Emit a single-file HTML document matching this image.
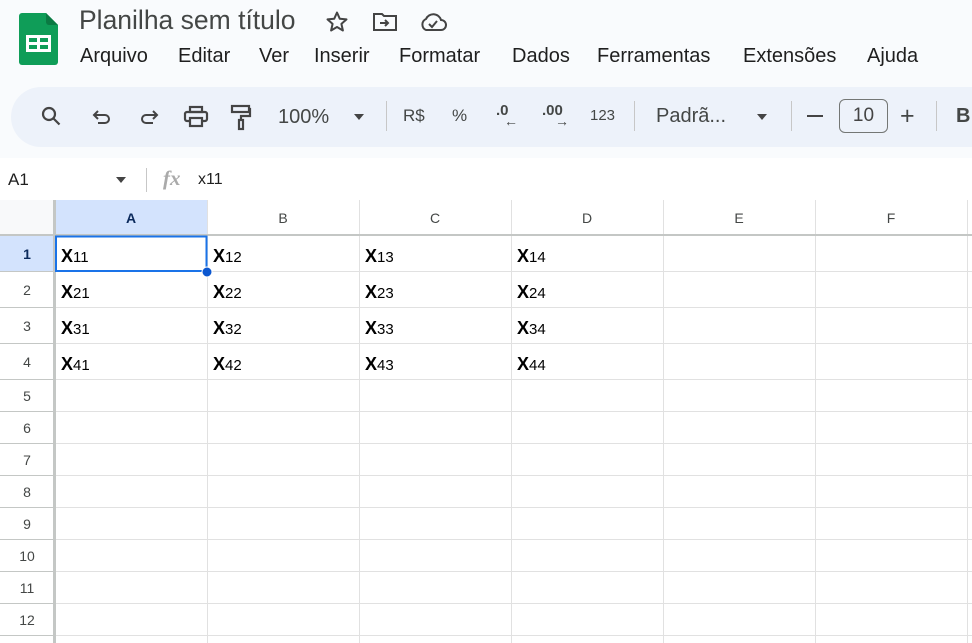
<!DOCTYPE html><html><head><meta charset="utf-8"><style>
*{margin:0;padding:0;box-sizing:border-box}
body{width:972px;height:643px;overflow:hidden;background:#f9fbfd;font-family:"Liberation Sans",Arial,sans-serif;position:relative;color:#1f1f1f}
.a{position:absolute}
.tb{color:#444746;font-size:19px}
.cell{position:absolute;font-size:15px;color:#000}
.cell b{font-weight:bold;font-size:18px}
.rh{position:absolute;left:0;width:54px;text-align:center;font-size:14px;color:#444746}
.ch{position:absolute;top:201px;height:35px;line-height:35px;text-align:center;font-size:14px;color:#444746}
</style></head><body>
<svg class="a" style="left:19px;top:13px" width="40" height="52" viewBox="0 0 40 52"><path d="M3 0h24l12 12v37a3 3 0 0 1-3 3H3a3 3 0 0 1-3-3V3a3 3 0 0 1 3-3z" fill="#0f9d58"/><path d="M27 0l12 12H30a3 3 0 0 1-3-3z" fill="#0b7a43"/><rect x="7" y="22" width="25" height="17" fill="#fff"/><rect x="10" y="25" width="8" height="4" fill="#0f9d58"/><rect x="21" y="25" width="8" height="4" fill="#0f9d58"/><rect x="10" y="32" width="8" height="4" fill="#0f9d58"/><rect x="21" y="32" width="8" height="4" fill="#0f9d58"/></svg>
<div class="a" style="left:79px;top:5px;font-size:26.5px;color:#444746">Planilha sem título</div>
<svg class="a" style="left:325px;top:10px" width="24" height="24" viewBox="0 0 24 24" fill="none" stroke="#444" stroke-width="2" stroke-linejoin="round"><path d="M12 2.5l2.8 6.3 6.7.6-5.1 4.5 1.5 6.6L12 17l-5.9 3.5 1.5-6.6-5.1-4.5 6.7-.6z"/></svg>
<svg class="a" style="left:372px;top:11px" width="26" height="22" viewBox="0 0 26 22" fill="none" stroke="#444" stroke-width="2"><path d="M2 3h8l2 2h12v14H2z"/><path d="M8 12h8M13 9l3 3-3 3"/></svg>
<svg class="a" style="left:419px;top:12px" width="28" height="20" viewBox="0 0 28 20" fill="none" stroke="#444" stroke-width="2"><path d="M7 18h15a5 5 0 0 0 0-10 8 8 0 0 0-15-1 6 6 0 0 0 0 11z"/><path d="M10 12l3 3 5-6"/></svg>
<div class="a" style="left:80px;top:45px;font-size:20px">
<span style="position:absolute;left:0">Arquivo</span><span style="position:absolute;left:98px">Editar</span><span style="position:absolute;left:179px">Ver</span><span style="position:absolute;left:234px">Inserir</span><span style="position:absolute;left:319px">Formatar</span><span style="position:absolute;left:432px">Dados</span><span style="position:absolute;left:517px">Ferramentas</span><span style="position:absolute;left:663px">Extensões</span><span style="position:absolute;left:787px">Ajuda</span></div>
<div class="a" style="left:11px;top:87px;width:1000px;height:60px;background:#edf2fa;border-radius:30px"></div>
<svg class="a" style="left:40px;top:105px" width="24" height="24" viewBox="0 0 24 24" fill="none" stroke="#444" stroke-width="2.2"><circle cx="9" cy="9" r="6"/><path d="M13.5 13.5l6 6"/></svg>
<svg class="a" style="left:90px;top:106px" width="24" height="24" viewBox="0 0 24 24" fill="none" stroke="#444" stroke-width="2"><path d="M5 9h10a4 4 0 0 1 0 8H8"/><path d="M8 5L4 9l4 4"/></svg>
<svg class="a" style="left:137px;top:106px" width="24" height="24" viewBox="0 0 24 24" fill="none" stroke="#444" stroke-width="2"><path d="M19 9H9a4 4 0 0 0 0 8h7"/><path d="M16 5l4 4-4 4"/></svg>
<svg class="a" style="left:183px;top:105px" width="26" height="24" viewBox="0 0 26 24" fill="none" stroke="#444" stroke-width="2.2"><rect x="7" y="2" width="12" height="5"/><rect x="2" y="7" width="22" height="9" rx="2"/><rect x="7" y="13" width="12" height="8" fill="#edf2fa"/></svg>
<svg class="a" style="left:230px;top:104px" width="22" height="28" viewBox="0 0 22 28" fill="none" stroke="#444" stroke-width="2.2"><rect x="2" y="2" width="17" height="6"/><path d="M19 5h1v7H11v4"/><rect x="9" y="16" width="4" height="9"/></svg>
<div class="a tb" style="left:278px;top:106px;font-size:20px">100%</div>
<div class="a" style="left:354px;top:114px;border:5px solid transparent;border-top:6px solid #444"></div>
<div class="a" style="left:386px;top:101px;width:1px;height:30px;background:#c7c7c7"></div>
<div class="a tb" style="left:403px;top:106px;font-size:17px">R$</div>
<div class="a tb" style="left:452px;top:106px;font-size:17px">%</div>
<div class="a tb" style="left:496px;top:102px;font-size:15px;font-weight:bold">.0</div>
<div class="a tb" style="left:504px;top:113px;font-size:14px;font-weight:bold">←</div>
<div class="a tb" style="left:542px;top:102px;font-size:15px;font-weight:bold">.00</div>
<div class="a tb" style="left:555px;top:113px;font-size:14px;font-weight:bold">→</div>
<div class="a tb" style="left:590px;top:107px;font-size:15px">123</div>
<div class="a" style="left:634px;top:101px;width:1px;height:30px;background:#c7c7c7"></div>
<div class="a tb" style="left:656px;top:105px;font-size:20px">Padrã...</div>
<div class="a" style="left:757px;top:114px;border:5px solid transparent;border-top:6px solid #444"></div>
<div class="a" style="left:791px;top:101px;width:1px;height:30px;background:#c7c7c7"></div>
<div class="a" style="left:807px;top:115px;width:16px;height:2px;background:#444"></div>
<div class="a" style="left:839px;top:99px;width:49px;height:34px;border:1px solid #747775;border-radius:6px;text-align:center;line-height:32px;font-size:19px;color:#444">10</div>
<div class="a tb" style="left:900px;top:102px;font-size:25px">+</div>
<div class="a" style="left:936px;top:101px;width:1px;height:30px;background:#c7c7c7"></div>
<div class="a tb" style="left:956px;top:105px;font-size:20px;font-weight:bold">B</div>
<div class="a" style="left:0;top:158px;width:972px;height:42px;background:#fff"></div>
<div class="a" style="left:8px;top:170px;font-size:17px">A1</div>
<div class="a" style="left:116px;top:177px;border:5px solid transparent;border-top:6px solid #444"></div>
<div class="a" style="left:146px;top:168px;width:1px;height:24px;background:#c7c7c7"></div>
<div class="a" style="left:163px;top:166px;font-size:21px;font-style:italic;font-weight:bold;font-family:'Liberation Serif',serif;color:#aaa">fx</div>
<div class="a" style="left:198px;top:171px;font-size:16px">x11</div>
<div class="a" style="left:0;top:200px;width:972px;height:443px;background:#fff"></div>
<div class="a" style="left:0;top:200px;width:54px;height:35px;background:#f8f9fa"></div>
<div class="a" style="left:55px;top:200px;width:152px;height:36px;background:#d3e3fd"></div>
<div class="a" style="left:0;top:236px;width:54px;height:36px;background:#d3e3fd"></div>
<svg class="a" style="left:0;top:200px" width="972" height="443">
<g stroke="#e1e1e1" stroke-width="1">
<line x1="207.5" y1="0" x2="207.5" y2="443"/><line x1="359.5" y1="0" x2="359.5" y2="443"/><line x1="511.5" y1="0" x2="511.5" y2="443"/><line x1="663.5" y1="0" x2="663.5" y2="443"/><line x1="815.5" y1="0" x2="815.5" y2="443"/><line x1="967.5" y1="0" x2="967.5" y2="443"/>
<line x1="55" y1="71.5" x2="972" y2="71.5"/><line x1="55" y1="107.5" x2="972" y2="107.5"/><line x1="55" y1="143.5" x2="972" y2="143.5"/><line x1="55" y1="179.5" x2="972" y2="179.5"/><line x1="55" y1="211.5" x2="972" y2="211.5"/><line x1="55" y1="243.5" x2="972" y2="243.5"/><line x1="55" y1="275.5" x2="972" y2="275.5"/><line x1="55" y1="307.5" x2="972" y2="307.5"/><line x1="55" y1="339.5" x2="972" y2="339.5"/><line x1="55" y1="371.5" x2="972" y2="371.5"/><line x1="55" y1="403.5" x2="972" y2="403.5"/><line x1="55" y1="435.5" x2="972" y2="435.5"/>
</g>
<g stroke="#c4c7c5" stroke-width="1">
<line x1="0" y1="71.5" x2="54" y2="71.5"/><line x1="0" y1="107.5" x2="54" y2="107.5"/><line x1="0" y1="143.5" x2="54" y2="143.5"/><line x1="0" y1="179.5" x2="54" y2="179.5"/><line x1="0" y1="211.5" x2="54" y2="211.5"/><line x1="0" y1="243.5" x2="54" y2="243.5"/><line x1="0" y1="275.5" x2="54" y2="275.5"/><line x1="0" y1="307.5" x2="54" y2="307.5"/><line x1="0" y1="339.5" x2="54" y2="339.5"/><line x1="0" y1="371.5" x2="54" y2="371.5"/><line x1="0" y1="403.5" x2="54" y2="403.5"/><line x1="0" y1="435.5" x2="54" y2="435.5"/>
</g>
<rect x="0" y="34" width="972" height="2" fill="#c4c7c5"/>
<rect x="53" y="0" width="3" height="443" fill="#c4c7c5"/>
<rect x="56" y="36.5" width="150.5" height="34.5" fill="none" stroke="#1a73e8" stroke-width="2"/>
<circle cx="207" cy="72" r="5" fill="#0b57d0" stroke="#fff" stroke-width="1"/>
</svg>
<div class="ch" style="left:55px;width:152px;font-weight:bold;color:#0b2a5c">A</div>
<div class="ch" style="left:207px;width:152px">B</div>
<div class="ch" style="left:359px;width:152px">C</div>
<div class="ch" style="left:511px;width:152px">D</div>
<div class="ch" style="left:663px;width:152px">E</div>
<div class="ch" style="left:815px;width:152px">F</div>
<div class="rh" style="top:246px;font-weight:bold;color:#0b2a5c">1</div>
<div class="rh" style="top:282px">2</div><div class="rh" style="top:318px">3</div><div class="rh" style="top:354px">4</div>
<div class="rh" style="top:388px">5</div><div class="rh" style="top:420px">6</div><div class="rh" style="top:452px">7</div><div class="rh" style="top:484px">8</div><div class="rh" style="top:516px">9</div><div class="rh" style="top:548px">10</div><div class="rh" style="top:580px">11</div><div class="rh" style="top:612px">12</div>
<div class="cell" style="left:61px;top:246px"><b>X</b>11</div><div class="cell" style="left:213px;top:246px"><b>X</b>12</div><div class="cell" style="left:365px;top:246px"><b>X</b>13</div><div class="cell" style="left:517px;top:246px"><b>X</b>14</div>
<div class="cell" style="left:61px;top:282px"><b>X</b>21</div><div class="cell" style="left:213px;top:282px"><b>X</b>22</div><div class="cell" style="left:365px;top:282px"><b>X</b>23</div><div class="cell" style="left:517px;top:282px"><b>X</b>24</div>
<div class="cell" style="left:61px;top:318px"><b>X</b>31</div><div class="cell" style="left:213px;top:318px"><b>X</b>32</div><div class="cell" style="left:365px;top:318px"><b>X</b>33</div><div class="cell" style="left:517px;top:318px"><b>X</b>34</div>
<div class="cell" style="left:61px;top:354px"><b>X</b>41</div><div class="cell" style="left:213px;top:354px"><b>X</b>42</div><div class="cell" style="left:365px;top:354px"><b>X</b>43</div><div class="cell" style="left:517px;top:354px"><b>X</b>44</div>
</body></html>
